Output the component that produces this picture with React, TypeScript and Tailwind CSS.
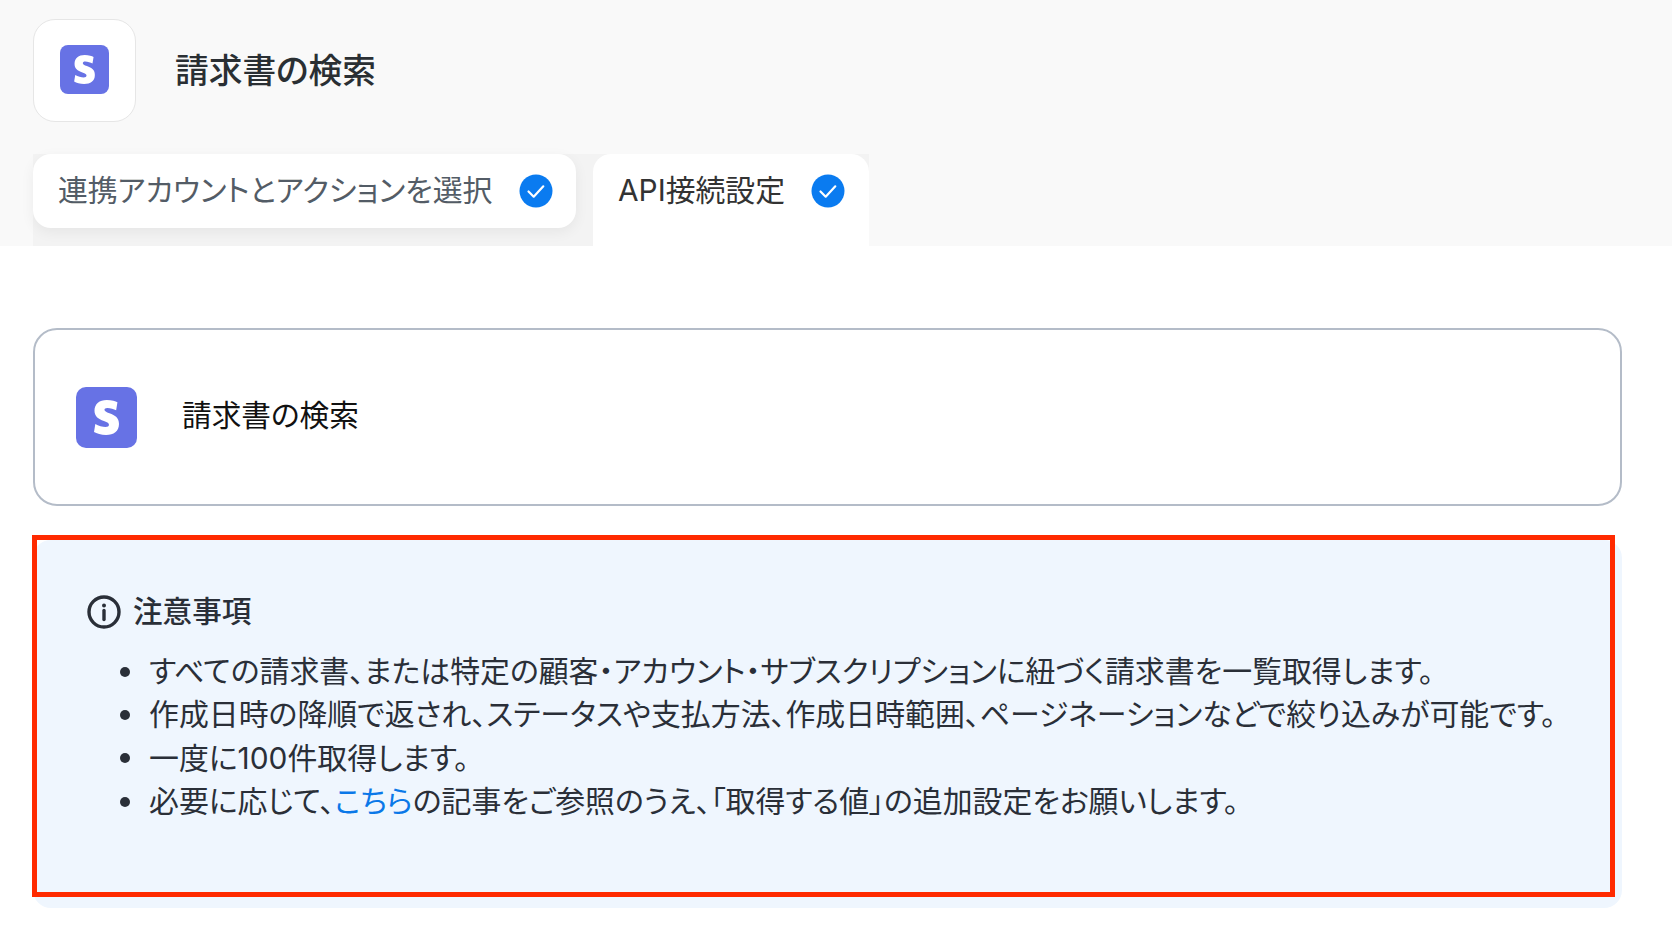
const STRIPE_S = "M13.976 9.15c-2.172-.806-3.356-1.426-3.356-2.409 0-.831.683-1.305 1.901-1.305 2.227 0 4.515.858 6.09 1.631l.89-5.494C18.252.975 15.697 0 12.165 0 9.667 0 7.589.654 6.104 1.872 4.56 3.147 3.757 4.992 3.757 7.218c0 4.039 2.467 5.76 6.476 7.219 2.585.92 3.445 1.574 3.445 2.583 0 .98-.84 1.545-2.354 1.545-1.875 0-4.965-.921-6.99-2.109l-.9 5.555C5.175 22.99 8.385 24 11.714 24c2.641 0 4.843-.624 6.328-1.813 1.664-1.305 2.525-3.236 2.525-5.732 0-4.128-2.524-5.851-6.594-7.305h.003z";

const StripeIcon = ({ box, glyph, radius }: { box: string, glyph: string, radius: string }) => (
    <div className={`flex shrink-0 items-center justify-center bg-[#6772e5] ${box} ${radius}`}>
        <svg viewBox="0 0 24 24" className={glyph} fill="#ffffff">
            <path d={STRIPE_S} />
        </svg>
    </div>
);

const CheckBadge = () => (
    <svg viewBox="0 0 34 34" className="h-[34px] w-[34px] shrink-0">
        <circle cx="17" cy="17" r="16.5" fill="#0a7bf0" />
        <path d="M9.5 17.5l5.2 5.2 9.6-10.4" fill="none" stroke="#ffffff" strokeWidth="2.2" strokeLinecap="round" strokeLinejoin="round" />
    </svg>
);

const Note = ({ children }: { children: React.ReactNode }) => (
    <li className="flex items-center">
        <span className="mr-[19px] h-[10px] w-[10px] shrink-0 rounded-full bg-[#2a2f38]" />
        <span>{children}</span>
    </li>
);

export default function App() {
    return (
        <div className="min-h-[928px] bg-white font-['Inter','Noto_Sans_CJK_JP',sans-serif] [font-feature-settings:'palt']">
            <div className="h-[246px] bg-[#f9f9f9] pl-[33px] pt-[19px]">
                <div className="flex items-center">
                    <div className="flex h-[103px] w-[103px] items-center justify-center rounded-[22px] border border-[#e6e6e6] bg-white pb-[2px]">
                        <StripeIcon box="h-[49px] w-[49px]" glyph="h-[29px] w-[29px]" radius="rounded-[8px]" />
                    </div>
                    <h1 className="ml-[39px] text-[33.7px] font-medium leading-none text-[#2a2f33]">請求書の検索</h1>
                </div>
                <div className="mt-[32px] flex h-[92px] w-[836px] items-start bg-[#f3f3f3]">
                    <div className="flex h-[74px] w-[543px] items-center rounded-[18px] bg-white pl-[25px] shadow-[0_4px_14px_rgba(0,0,0,0.06)]">
                        <span className="w-[461px] pb-[2px] text-[29.85px] text-[#535c66]">連携アカウントとアクションを選択</span>
                        <CheckBadge />
                    </div>
                    <div className="ml-[17px] flex h-[92px] w-[276px] items-start rounded-t-[18px] bg-white pl-[25px] pt-[20px]">
                        <span className="w-[193px] text-[29.85px] leading-[33px] text-[#333333]">API接続設定</span>
                        <CheckBadge />
                    </div>
                </div>
            </div>

            <div className="px-[33px] pt-[82px]">
                <div className="flex h-[178px] w-[1589px] items-center rounded-[24px] border-2 border-[#b4bcc8] bg-white pl-[41px]">
                    <StripeIcon box="h-[61px] w-[61px]" glyph="h-[35px] w-[35px]" radius="rounded-[10px]" />
                    <span className="mb-[4px] ml-[45px] text-[29.65px] text-[#111111]">請求書の検索</span>
                </div>

                <div className="relative mt-[34px] h-[368px] w-[1589px] rounded-[18px] bg-[#eff6fe] pl-[54px] pt-[54px] text-[#2a2f38]">
                    <div className="flex items-center">
                        <svg viewBox="0 0 34 34" className="h-[34px] w-[34px]" fill="none" stroke="#2a2f38">
                            <circle cx="17" cy="17" r="15" strokeWidth="3.4" />
                            <path d="M17 15.5v9" strokeWidth="3.4" strokeLinecap="round" />
                            <circle cx="17" cy="10.5" r="2" fill="#2a2f38" stroke="none" />
                        </svg>
                        <span className="mb-[2px] ml-[12px] text-[29.6px] font-medium leading-[34px]">注意事項</span>
                    </div>
                    <ul className="mt-[20px] pl-[33px] text-[29.9px] leading-[43.35px]">
                        <Note>すべての請求書、または特定の顧客・アカウント・サブスクリプションに紐づく請求書を一覧取得します。</Note>
                        <Note>作成日時の降順で返され、ステータスや支払方法、作成日時範囲、ページネーションなどで絞り込みが可能です。</Note>
                        <Note>一度に100件取得します。</Note>
                        <Note>
                            必要に応じて、<span className="text-[#0a78e8]">こちら</span>の記事をご参照のうえ、「取得する値」の追加設定をお願いします。
                        </Note>
                    </ul>
                    {/* red annotation drawn on top of the screenshot */}
                    <div className="absolute left-[-1px] top-[-5px] h-[362px] w-[1583px] border-[5px] border-[#ff2a00]" />
                </div>
            </div>
        </div>
    );
}
